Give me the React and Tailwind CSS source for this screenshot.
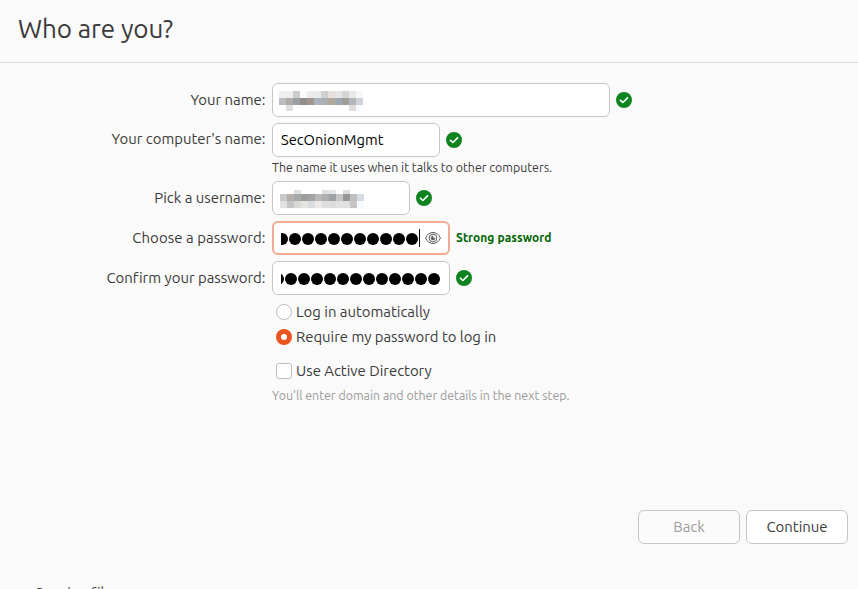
const NAME_MOSAIC = [
  ['#f0f0f0', '#eeeeee', '#cccbca', '#fbfbfb', '#ececec', '#e9eaeb', '#cfcfcf', '#e6e1de', '#e6e6e6', '#d2d6d8', '#ebe9e8', '#f6f7f8'],
  ['#bdbdbd', '#b2aca6', '#98a0a6', '#918e8b', '#9f9790', '#aab4be', '#acafb2', '#b2a798', '#9da9b2', '#a09d9a', '#b3b8bd', '#cfd2d8'],
  ['#ffffff', '#dededf', '#ffffff', '#ffffff', '#ffffff', '#ffffff', '#ffffff', '#ffffff', '#ffffff', '#ffffff', '#e0dcdb', '#f8fbff'],
];

const USER_MOSAIC = [
  ['#ffffff', '#ffffff', '#dedede', '#ffffff', '#ffffff', '#ffffff', '#dedfdf', '#e5e6e5', '#ffffff', '#dedede', '#ffffff', '#ffffff'],
  ['#c8c8c8', '#b5aeaa', '#a3aaaa', '#9d9d9d', '#a3a3a3', '#b8b8b8', '#acaeb0', '#9ea2a5', '#c5c5c5', '#989898', '#bfbfbf', '#d5dbe5'],
  ['#e2e2e2', '#c4c4c4', '#d8d8d5', '#e4e4e4', '#d9dde0', '#ebe8e8', '#dfdfdf', '#dcdcdc', '#e2e2e2', '#e0dfdf', '#c4c4c4', '#f8fbff'],
];

function Mosaic({ rows, heights, className }) {
  return (
    <div className={className}>
      {rows.map((row, i) => (
        <div key={i} className={`flex ${heights[i]}`}>
          {row.map((color, j) => (
            <span key={j} className="w-[7px]" style={{ backgroundColor: color }} />
          ))}
        </div>
      ))}
    </div>
  );
}

function Check() {
  return (
    <svg className="ml-1.5 h-4 w-4 shrink-0" viewBox="0 0 16 16">
      <circle cx="8" cy="8" r="8" fill="#0e8420" />
      <path d="M3.9 7.9 6.9 10.5 12 5.4" fill="none" stroke="#fff" strokeWidth="1.6" />
    </svg>
  );
}

function Eye() {
  return (
    <svg className="h-4 w-4" viewBox="0 0 16 16" fill="none" stroke="#5a5a5a">
      <path d="M.6 8C2.1 4.3 4.8 2.5 8 2.5S13.900 4.300 15.400 8C13.900 11.700 11.200 13.500 8 13.500S2.100 11.700.6 8Z" strokeWidth="1" />
      <circle cx="8" cy="8" r="3.9" strokeWidth="1" />
      <path d="M8 6v2h2a2 2 0 1 1-2-2Z" fill="#5a5a5a" strokeWidth=".5" />
    </svg>
  );
}

function Dots({ count, className }) {
  return (
    <div className={`flex justify-end gap-[1px] overflow-hidden ${className}`}>
      {Array.from({ length: count }, (_, i) => (
        <span key={i} className="h-[12px] w-[12px] shrink-0 rounded-full bg-black" />
      ))}
    </div>
  );
}

function Row({ label, tracking, className = '', labelClass = '', children }) {
  return (
    <div className={`flex h-[34px] items-center ${className}`}>
      <div className={`mr-[6.5px] w-[265.5px] shrink-0 text-right whitespace-nowrap ${labelClass}`}>
        <span className={tracking}>{label}</span>
      </div>
      {children}
    </div>
  );
}

const FIELD = 'flex h-[34px] shrink-0 items-center rounded-md border border-[#c6c6c6] bg-white';

export default function App() {
  return (
    <div className="flex h-[589px] w-[858px] flex-col overflow-hidden bg-[#fafafa] font-['Ubuntu','Noto_Sans',sans-serif] text-[14.9px] leading-5 text-[#3a3a3a] [font-variant-ligatures:none]">
      <header className="flex h-[63px] shrink-0 items-start border-b border-[#dcdcdc] pt-[13px] pl-[18px]">
        <h1 className="text-[26px] leading-8 tracking-[-0.08px] whitespace-nowrap">Who are you?</h1>
      </header>

      <main className="flex h-[447px] shrink-0 flex-col pt-5">
        <Row label="Your name:">
          <div className={`${FIELD} w-[338px] pl-1.5`}>
            <Mosaic rows={NAME_MOSAIC} heights={['h-[7px]', 'h-[7px]', 'h-[6px]']} className="mt-0.5" />
          </div>
          <Check />
        </Row>
        <Row label="Your computer's name:" className="mt-1.5" labelClass="pb-[2px]">
          <div className={`${FIELD} w-[168px] pl-2 text-black`}>
            <span className="text-[14.667px]">SecOnionMgmt</span>
          </div>
          <Check />
        </Row>
        <p className="mt-px ml-[272px] h-[23px] text-[12.4px] leading-[18px] whitespace-nowrap">
          <span>The name it uses when it talks to other computers.</span>
        </p>
        <Row label="Pick a username:">
          <div className={`${FIELD} w-[138px] pl-[7px]`}>
            <Mosaic rows={USER_MOSAIC} heights={['h-[4px]', 'h-[7px]', 'h-[7px]']} className="mt-0.5" />
          </div>
          <Check />
        </Row>
        <Row label="Choose a password:" tracking="tracking-[0.08px]" className="mt-1.5">
          <div className="flex h-[34px] w-[178px] shrink-0 items-center rounded-md border-2 border-[#f4aa90] bg-white pl-[7px]">
            <Dots count={11} className="mt-[2px] w-[137px]" />
            <span className="ml-px h-[18px] w-px bg-black" />
            <span className="ml-[5px]"><Eye /></span>
          </div>
          <span className="ml-1.5 text-[12px] font-bold tracking-[0.06px] whitespace-nowrap text-[#006400]">Strong password</span>
        </Row>
        <Row label="Confirm your password:" className="mt-1.5">
          <div className={`${FIELD} w-[178px] pl-2`}>
            <Dots count={13} className="mt-[2px] w-[159px]" />
          </div>
          <Check />
        </Row>

        <div className="ml-[276px] flex flex-col pt-[7px] whitespace-nowrap">
          <label className="flex h-5 items-center gap-1">
            <span className="h-4 w-4 rounded-full border border-[#bdbdbd] bg-white" />
            <span>Log in automatically</span>
          </label>
          <label className="mt-[5px] flex h-5 items-center gap-1">
            <span className="flex h-4 w-4 items-center justify-center rounded-full bg-[#e95420]">
              <span className="h-[6px] w-[6px] rounded-full bg-white" />
            </span>
            <span className="tracking-[-0.02px]">Require my password to log in</span>
          </label>
          <label className="mt-[14px] flex h-5 items-center gap-1">
            <span className="h-4 w-4 rounded-[3px] border border-[#bdbdbd] bg-white" />
            <span>Use Active Directory</span>
          </label>
        </div>
        <p className="mt-[5px] ml-[272px] text-[12.4px] leading-[18px] whitespace-nowrap text-[#9b9b9b]">
          <span>You'll enter domain and other details in the next step.</span>
        </p>
      </main>

      <div className="flex shrink-0 justify-end gap-1.5 pr-2.5">
        <button className="h-[34px] w-[102px] rounded-md border border-[#c6c6c6] bg-[#fbfbfb] text-[#9b9b9b]">Back</button>
        <button className="h-[34px] w-[102px] rounded-md border border-[#c6c6c6] bg-white">Continue</button>
      </div>

      <footer className="mt-[39px] ml-[34px] shrink-0 text-[14.667px] whitespace-nowrap">
        <span>Copying files...</span>
      </footer>
    </div>
  );
}
